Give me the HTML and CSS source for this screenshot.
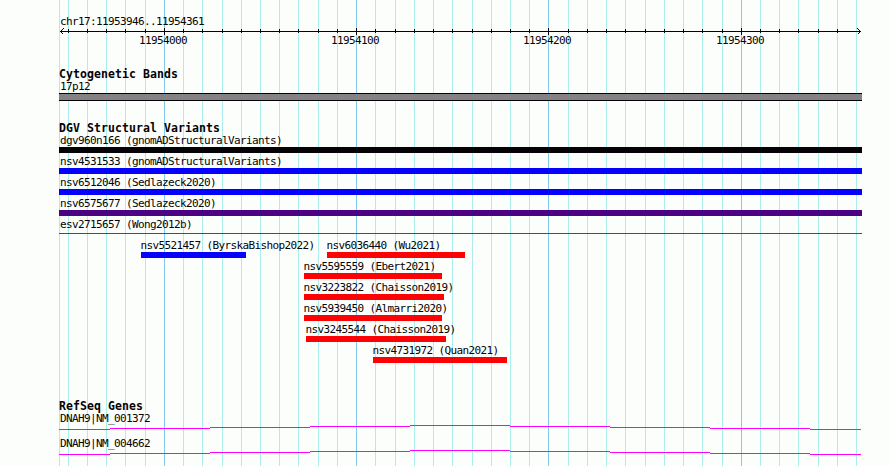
FILE: index.html
```
<!DOCTYPE html>
<html lang="en">
<head>
  <meta charset="UTF-8">
  <title>chr17:11953946..11954361</title>
  <link rel="stylesheet" href="styles.css">
</head>
<body>
  <div class="browser">
    <!-- vertical guide lines behind all tracks -->
    <svg class="grid" width="803" height="466">
      <path class="minor" d="M.5 0v466M9.5 0v466M28.5 0v466M47.5 0v466M66.5 0v466M86.5 0v466M124.5 0v466M143.5 0v466M163.5 0v466M182.5 0v466M201.5 0v466M220.5 0v466M239.5 0v466M259.5 0v466M278.5 0v466M316.5 0v466M336.5 0v466M355.5 0v466M374.5 0v466M393.5 0v466M413.5 0v466M432.5 0v466M451.5 0v466M470.5 0v466M509.5 0v466M528.5 0v466M547.5 0v466M566.5 0v466M586.5 0v466M605.5 0v466M624.5 0v466M643.5 0v466M663.5 0v466M701.5 0v466M720.5 0v466M739.5 0v466M759.5 0v466M778.5 0v466M797.5 0v466"/>
      <path class="major" d="M105.5 0v466M297.5 0v466M489.5 0v466M682.5 0v466"/>
    </svg>

    <header class="scale">
      <div class="label">chr17:11953946..11954361</div>
      <svg class="ruler" width="803" height="20">
        <path d="M1 3.5h801"/>
        <path d="M9.5 1v4M28.5 1v4M47.5 1v4M66.5 1v4M86.5 1v4M124.5 1v4M143.5 1v4M163.5 1v4M182.5 1v4M201.5 1v4M220.5 1v4M239.5 1v4M259.5 1v4M278.5 1v4M316.5 1v4M336.5 1v4M355.5 1v4M374.5 1v4M393.5 1v4M413.5 1v4M432.5 1v4M451.5 1v4M470.5 1v4M509.5 1v4M528.5 1v4M547.5 1v4M566.5 1v4M586.5 1v4M605.5 1v4M624.5 1v4M643.5 1v4M663.5 1v4M701.5 1v4M720.5 1v4M739.5 1v4M759.5 1v4M778.5 1v4"/>
        <path d="M105.5 0v7M297.5 0v7M489.5 0v7M682.5 0v7"/>
        <path d="M4.5 .5l-3 3l3 3M798.5 .5l3 3l-3 3"/>
        <text x="80" y="16">11954000</text>
        <text x="272" y="16">11954100</text>
        <text x="464" y="16">11954200</text>
        <text x="657" y="16">11954300</text>
      </svg>
    </header>

    <section class="track cytoband">
      <h2>Cytogenetic Bands</h2>
      <div class="label">17p12</div>
      <div class="band"></div>
    </section>

    <section class="track variants">
      <h2>DGV Structural Variants</h2>
      <div class="row">
        <div class="feature full"><div class="label">dgv960n166 (gnomADStructuralVariants)</div><div class="bar black"></div></div>
      </div>
      <div class="row">
        <div class="feature full"><div class="label">nsv4531533 (gnomADStructuralVariants)</div><div class="bar blue"></div></div>
      </div>
      <div class="row">
        <div class="feature full"><div class="label">nsv6512046 (Sedlazeck2020)</div><div class="bar blue"></div></div>
      </div>
      <div class="row">
        <div class="feature full"><div class="label">nsv6575677 (Sedlazeck2020)</div><div class="bar indigo"></div></div>
      </div>
      <div class="row">
        <div class="feature full"><div class="label">esv2715657 (Wong2012b)</div><div class="bar thin red"></div></div>
      </div>
      <div class="row">
        <div class="feature" style="margin-left: 82px; width: 105px"><div class="label">nsv5521457 (ByrskaBishop2022)</div><div class="bar blue"></div></div>
        <div class="feature" style="margin-left: 81px; width: 138px"><div class="label">nsv6036440 (Wu2021)</div><div class="bar red"></div></div>
      </div>
      <div class="row">
        <div class="feature" style="margin-left: 245px; width: 138px"><div class="label">nsv5595559 (Ebert2021)</div><div class="bar red"></div></div>
      </div>
      <div class="row">
        <div class="feature" style="margin-left: 245px; width: 140px"><div class="label">nsv3223822 (Chaisson2019)</div><div class="bar red"></div></div>
      </div>
      <div class="row">
        <div class="feature" style="margin-left: 245px; width: 138px"><div class="label">nsv5939450 (Almarri2020)</div><div class="bar red"></div></div>
      </div>
      <div class="row">
        <div class="feature" style="margin-left: 247px; width: 140px"><div class="label">nsv3245544 (Chaisson2019)</div><div class="bar red"></div></div>
      </div>
      <div class="row">
        <div class="feature" style="margin-left: 314px; width: 134px"><div class="label">nsv4731972 (Quan2021)</div><div class="bar red"></div></div>
      </div>
    </section>

    <section class="track genes">
      <h2>RefSeq Genes</h2>
      <div class="gene">
        <div class="label">DNAH9|NM_001372</div>
        <svg class="intron" width="803" height="5">
          <path d="M0 4.5h51M51 3.5h100M151 2.5h100M251 1.5h100M351 .5h100M451 1.5h100M551 2.5h100M651 3.5h100M751 4.5h51"/>
        </svg>
      </div>
      <div class="gene">
        <div class="label">DNAH9|NM_004662</div>
        <svg class="intron" width="803" height="5">
          <path d="M0 4.5h51M51 3.5h100M151 2.5h100M251 1.5h100M351 .5h100M451 1.5h100M551 2.5h100M651 3.5h100M751 4.5h51"/>
        </svg>
      </div>
    </section>
  </div>
</body>
</html>
```
FILE: styles.css
```
* { margin: 0; padding: 0; box-sizing: border-box; }
body {
  background: #fcfefc;
  color: #040204;
  font-family: "DejaVu Sans Mono", monospace;
  font-size: 11px;
  letter-spacing: -0.622px;
  overflow: hidden;
}
svg {
  display: block;
  fill: none;
  stroke-width: 1;
  shape-rendering: crispEdges;
}
.browser {
  position: relative;
  width: 803px;
  height: 466px;
  margin-left: 59px;
  padding-top: 13px;
}
.grid {
  position: absolute;
  top: 0;
  left: 0;
  z-index: -1;
}
.minor { stroke: #aceeec; }
.major { stroke: #84caec; }
.label {
  height: 15px;
  line-height: 17px;
  white-space: nowrap;
  text-indent: 1px;
}
.ruler { stroke: #040204; }
.ruler text {
  fill: #040204;
  stroke: none;
}
h2 {
  height: 12px;
  line-height: 17px;
  font-size: 11.5px;
  font-weight: bold;
  letter-spacing: 0.077px;
  white-space: nowrap;
}
.cytoband { margin-top: 18px; }
.band {
  height: 8px;
  background: #848284;
  border: solid #040204;
  border-width: 1px 0;
}
.variants { margin-top: 19px; }
.row {
  display: flex;
  height: 21px;
}
.feature { flex: none; }
.feature .label { text-indent: -0.5px; }
.full { width: 100%; }
.full .label { text-indent: 1px; }
.bar { height: 6px; }
.thin {
  height: 1px;
  margin-top: 2px;
}
.black { background: #040204; }
.blue { background: #0402fc; }
.indigo { background: #4c0284; }
.red { background: #fc0204; }
.genes { margin-top: 35px; }
.gene { height: 25px; }
.intron { stroke: #fc02fc; }
```
